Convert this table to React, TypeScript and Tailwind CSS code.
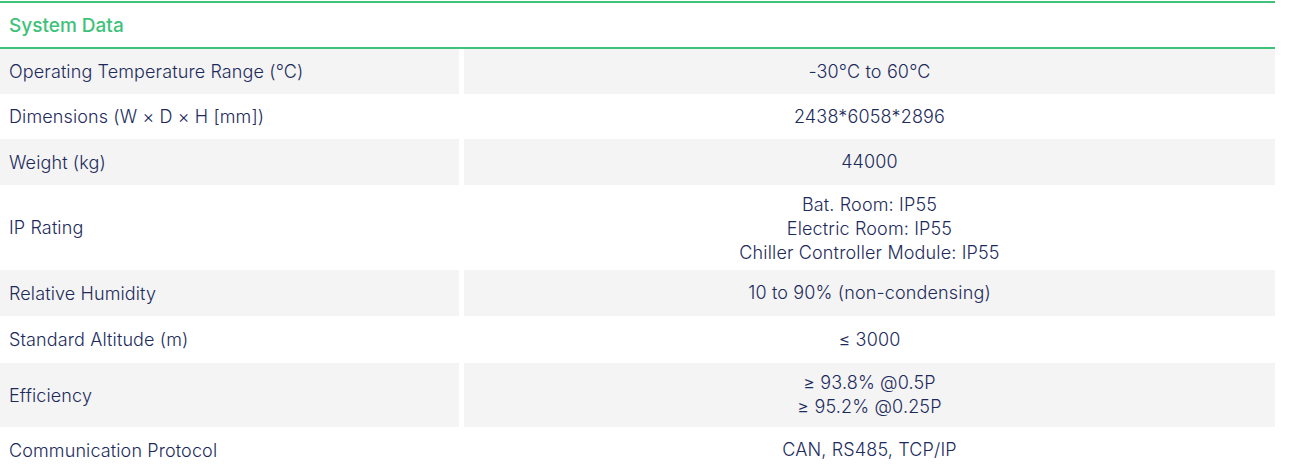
type Row = { label: string; value: string[]; h: string; gray: boolean; nudge?: boolean };

const rows: Row[] = [
  { label: "Operating Temperature Range (°C)", value: ["-30°C to 60°C"], h: "h-[45px]", gray: true },
  { label: "Dimensions (W × D × H [mm])", value: ["2438*6058*2896"], h: "h-[45px]", gray: false },
  { label: "Weight (kg)", value: ["44000"], h: "h-[46px]", gray: true },
  {
    label: "IP Rating",
    value: ["Bat. Room: IP55", "Electric Room: IP55", "Chiller Controller Module: IP55"],
    h: "h-[85px]",
    gray: false,
    nudge: true,
  },
  { label: "Relative Humidity", value: ["10 to 90% (non-condensing)"], h: "h-[46px]", gray: true },
  { label: "Standard Altitude (m)", value: ["≤ 3000"], h: "h-[47px]", gray: false },
  { label: "Efficiency", value: ["≥ 93.8% @0.5P", "≥ 95.2% @0.25P"], h: "h-[64px]", gray: true },
  { label: "Communication Protocol", value: ["CAN, RS485, TCP/IP"], h: "h-[46px]", gray: false },
];

export default function App() {
  return (
    <div
      className="h-[464px] w-[1290px] overflow-hidden bg-white pt-px text-[18px] font-light tracking-[0.12px] text-[#1d2b5c]"
      style={{ fontFamily: "Inter, 'Noto Sans', sans-serif" }}
    >
      <div className="w-[1275px]">
        <div className="flex h-[48px] items-center border-y-2 border-[#3ec27a] pb-px pl-[9px] pt-[3px] text-[19px] font-medium tracking-[0px] text-[#3ec27a]">
          System Data
        </div>
        {rows.map((row) => (
          <div key={row.label} className={`flex gap-[5px] ${row.h}`}>
            <div className={`flex w-[459px] items-center pl-[9px] ${row.gray ? "bg-[#f4f4f4]" : ""}`}>
              {row.label}
            </div>
            <div
              className={`flex flex-1 flex-col items-center justify-center leading-[24px] tracking-[0.15px] ${row.nudge ? "pt-[3px]" : ""} ${row.gray ? "bg-[#f4f4f4]" : ""}`}
            >
              {row.value.map((v) => (
                <span key={v}>{v}</span>
              ))}
            </div>
          </div>
        ))}
      </div>
    </div>
  );
}
